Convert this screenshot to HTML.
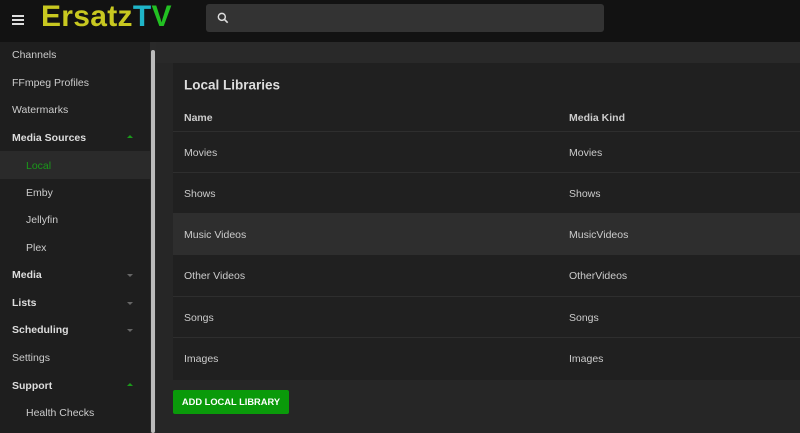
<!DOCTYPE html><html><head><style>
body{margin:0;width:800px;height:433px;overflow:hidden;background:#262626;font-family:"Liberation Sans",sans-serif;color:#ddd;position:relative}
.top{position:absolute;left:0;top:0;width:800px;height:42px;background:#121212}
.logo{position:absolute;left:41px;top:0px;font-size:30px;font-weight:bold;color:#c8c820;letter-spacing:0.3px}
.logo span.t{color:#1fb5c8}.logo span.v{color:#22c022}
.ham{position:absolute;left:12px;top:15px;width:12px;height:2px;background:#ddd;box-shadow:0 4px #ddd,0 8px #ddd}
.search{position:absolute;left:206px;top:4px;width:398px;height:28px;background:#333;border-radius:3px}
.side{position:absolute;left:0;top:42px;width:150px;height:391px;background:#1e1e1e}
.sb{position:absolute;left:150px;top:42px;width:6px;height:391px;background:#2a2a2a}
.sb i{position:absolute;left:1px;top:8px;width:4px;height:383px;background:#bbb;border-radius:2px}
.it{position:absolute;left:12px;font-size:10.5px;color:#ccc;transform:translateY(-50%)}
.b{font-weight:bold;color:#ddd}.s{left:26px}
.car{position:absolute;left:127px;width:0;height:0;border-left:3px solid transparent;border-right:3px solid transparent}
.up{border-bottom:3px solid #1a9a1a}.dn{border-top:3px solid #666}
.strip{position:absolute;left:156px;top:42px;width:644px;height:21px;background:#292929}
.card{position:absolute;left:173px;top:63px;width:627px;height:317px;background:#202020}
.row{position:absolute;left:0;width:627px;height:41px;border-top:1px solid #2e2e2e}
.c{position:absolute;font-size:10.5px;color:#ccc;transform:translateY(-50%)}
.btn{position:absolute;left:173px;top:390px;width:116px;height:24px;background:#0a9a0a;border-radius:2px;color:#fff;font-size:9.3px;font-weight:bold;text-align:center;line-height:25px}
</style></head><body>
<div class="top"><div class="ham"></div><div class="logo">Ersatz<span class="t">T</span><span class="v">V</span></div>
<div class="search"><svg style="position:absolute;left:10px;top:7px" width="14" height="14" viewBox="0 0 24 24"><circle cx="10" cy="10" r="6" stroke="#ddd" stroke-width="2.5" fill="none"/><path d="M14.5 14.5L20 20" stroke="#ddd" stroke-width="2.8"/></svg></div></div>
<div class="side">
<div style="position:absolute;left:0;top:109px;width:150px;height:28px;background:#2a2a2a"></div>
<div class="it" style="top:13px">Channels</div>
<div class="it" style="top:41px">FFmpeg Profiles</div>
<div class="it" style="top:68px">Watermarks</div>
<div class="it b" style="top:96px">Media Sources</div><div class="car up" style="top:93px"></div>
<div class="it s" style="top:124px;color:#1a9a1a">Local</div>
<div class="it s" style="top:151px">Emby</div>
<div class="it s" style="top:178px">Jellyfin</div>
<div class="it s" style="top:206px">Plex</div>
<div class="it b" style="top:233px">Media</div><div class="car dn" style="top:232px"></div>
<div class="it b" style="top:261px">Lists</div><div class="car dn" style="top:260px"></div>
<div class="it b" style="top:288px">Scheduling</div><div class="car dn" style="top:287px"></div>
<div class="it" style="top:316px">Settings</div>
<div class="it b" style="top:344px">Support</div><div class="car up" style="top:341px"></div>
<div class="it s" style="top:371px">Health Checks</div>
</div>
<div class="sb"><i></i></div>
<div class="strip"></div>
<div class="card">
<div class="c" style="left:11px;top:22px;font-size:13.5px;font-weight:bold;color:#ddd">Local Libraries</div>
<div class="c b" style="left:11px;top:55px">Name</div><div class="c b" style="left:396px;top:55px">Media Kind</div>
<div class="row" style="top:68px"><div class="c" style="left:11px;top:21px">Movies</div><div class="c" style="left:396px;top:21px">Movies</div></div>
<div class="row" style="top:109px"><div class="c" style="left:11px;top:21px">Shows</div><div class="c" style="left:396px;top:21px">Shows</div></div>
<div class="row" style="top:150px;background:#2e2e2e"><div class="c" style="left:11px;top:21px">Music Videos</div><div class="c" style="left:396px;top:21px">MusicVideos</div></div>
<div class="row" style="top:191px"><div class="c" style="left:11px;top:21px">Other Videos</div><div class="c" style="left:396px;top:21px">OtherVideos</div></div>
<div class="row" style="top:233px"><div class="c" style="left:11px;top:21px">Songs</div><div class="c" style="left:396px;top:21px">Songs</div></div>
<div class="row" style="top:274px"><div class="c" style="left:11px;top:21px">Images</div><div class="c" style="left:396px;top:21px">Images</div></div>
</div>
<div class="btn">ADD LOCAL LIBRARY</div>
</body></html>
